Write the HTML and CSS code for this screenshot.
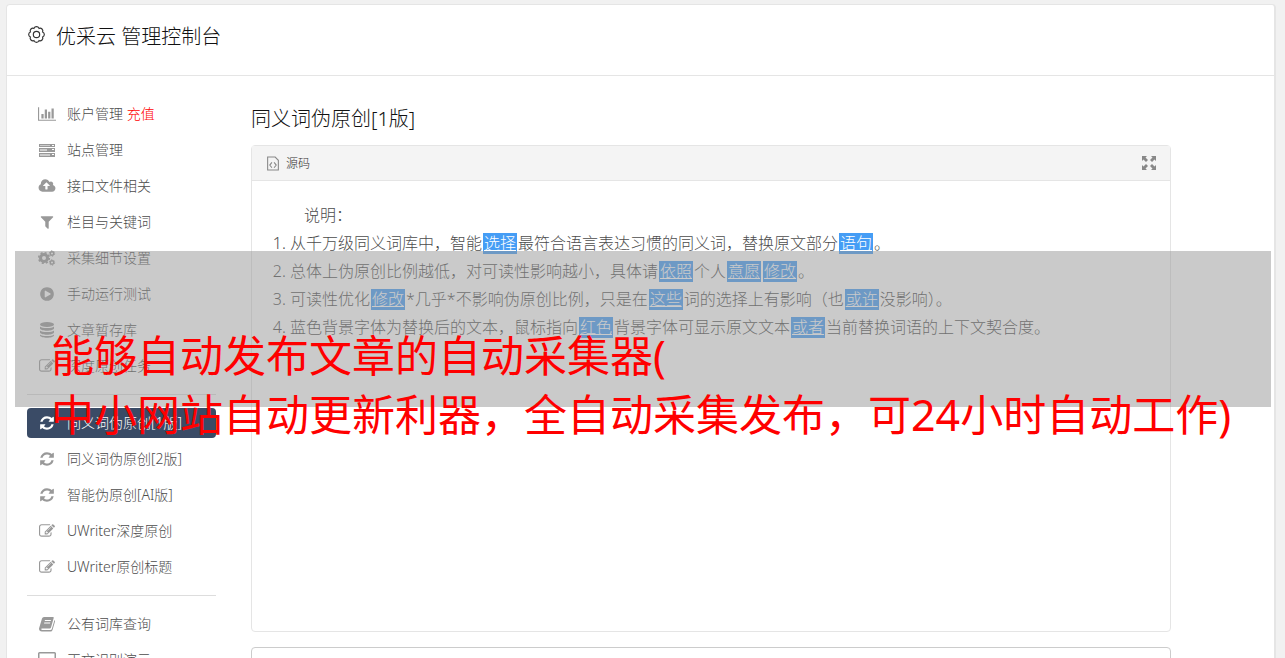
FILE: index.html
```html
<!DOCTYPE html>
<html lang="zh-Hans">
<head>
<meta charset="UTF-8">
<meta name="viewport" content="width=device-width, initial-scale=1.0">
<title>优采云 管理控制台</title>
<link rel="stylesheet" href="styles.css">
</head>
<body>
<svg class="sprite" aria-hidden="true">
    <symbol id="i-edit" viewBox="0 0 1792 1792"><path d="M888 1184l116-116-152-152-116 116v56h96v96h56zm440-720q-16-16-33 1l-350 350q-17 17-1 33t33-1l350-350q17-17 1-33zm80 594v190q0 119-84.500 203.500t-203.500 84.500h-832q-119 0-203.500-84.500t-84.500-203.500v-832q0-119 84.500-203.500t203.500-84.500h832q63 0 117 25 15 7 18 23 3 17-9 29l-49 49q-14 14-32 8-23-6-45-6h-832q-66 0-113 47t-47 113v832q0 66 47 113t113 47h832q66 0 113-47t47-113v-126q0-13 9-22l64-64q15-15 35-7t20 29zm-96-738l288 288-672 672h-288v-288zm444 132l-92 92-288-288 92-92q28-28 68-28t68 28l152 152q28 28 28 68t-28 68z"/></symbol>
    <symbol id="i-refresh" viewBox="0 0 1792 1792"><path d="M1639 1056q0 5-1 7-64 268-268 434.500t-478 166.500q-146 0-282.500-55t-243.500-157l-129 129q-19 19-45 19t-45-19-19-45v-448q0-26 19-45t45-19h448q26 0 45 19t19 45-19 45l-137 137q71 66 161 102t187 36q134 0 250-65t186-179q11-17 53-117 8-23 30-23h192q13 0 22.500 9.500t9.500 22.500zm25-800v448q0 26-19 45t-45 19h-448q-26 0-45-19t-19-45 19-45l138-138q-148-137-349-137-134 0-250 65t-186 179q-11 17-53 117-8 23-30 23h-199q-13 0-22.500-9.500t-9.500-22.500v-7q65-268 270-434.500t480-166.500q146 0 284 55.500t245 156.500l130-129q19-19 45-19t45 19 19 45z"/></symbol>
</svg>

<div class="panel">
    <header class="panel-head">
        <svg class="gear" viewBox="0 0 18 18"><path d="M14.800 6.600A2.600 2.600 0 0 1 14.800 11.400A2.600 2.600 0 0 1 11.400 14.800A2.600 2.600 0 0 1 6.600 14.800A2.600 2.600 0 0 1 3.200 11.400A2.600 2.600 0 0 1 3.200 6.600A2.600 2.600 0 0 1 6.600 3.200A2.600 2.600 0 0 1 11.400 3.200A2.600 2.600 0 0 1 14.800 6.600z"/><circle cx="9" cy="9" r="3"/></svg>
        <h1>优采云 管理控制台</h1>
    </header>

    <div class="panel-body">
        <nav class="sidebar">
            <ul>
                <li><a href="#"><svg class="icon" viewBox="0 0 2048 1792"><path d="M640 896v512h-256v-512h256zm384-512v1024h-256v-1024h256zm1024 1152v128h-2048v-1536h128v1408h1920zm-640-896v768h-256v-768h256zm384-384v1152h-256v-1152h256z"/></svg><span>账户管理 <em>充值</em></span></a></li>
                <li><a href="#"><svg class="icon" viewBox="0 0 18 16"><path fill-rule="evenodd" d="M1 2h16v3H1zM1 6h16v4H1zM1 11h16v4H1zM14 3v1h2V3zM14 7v1h2V7zM14 12v1h2v-1z"/><path class="slot" d="M2 3h10v1H2zM2 7h7v2H2zM2 12h10v2H2z"/></svg><span>站点管理</span></a></li>
                <li><a href="#"><svg class="icon" viewBox="0 0 2048 1792"><path d="M1344 864q0-14-9-23l-352-352q-9-9-23-9t-23 9l-351 351q-10 12-10 24 0 14 9 23t23 9h224v352q0 13 9.500 22.500t22.500 9.500h192q13 0 22.500-9.500t9.500-22.500v-352h224q13 0 22.500-9.500t9.500-22.500zm640 288q0 159-112.500 271.500t-271.500 112.500h-1088q-185 0-316.500-131.500t-131.500-316.500q0-130 70-240t188-165q-2-30-2-43 0-212 150-362t362-150q156 0 285.500 87t188.500 231q71-62 166-62 106 0 181 75t75 181q0 76-41 138 130 31 213.500 135.500t83.500 238.500z"/></svg><span>接口文件相关</span></a></li>
                <li><a href="#"><svg class="icon" viewBox="0 0 1792 1792"><path d="M1595 295q17 41-14 70l-493 493v742q0 42-39 59-13 5-25 5-27 0-45-19l-256-256q-19-19-19-45v-486l-493-493q-31-29-14-70 17-39 59-39h1280q42 0 59 39z"/></svg><span>栏目与关键词</span></a></li>
                <li><a href="#"><svg class="icon cogs" viewBox="0 0 18 16"><circle cx="6" cy="8" r="3.500" stroke-width="3"/><circle cx="6" cy="8" r="5.300" stroke-width="1.600" stroke-dasharray="2.080"/><circle cx="14" cy="3.500" r="1.700" stroke-width="1.400"/><circle cx="14" cy="3.500" r="2.700" stroke-width="1" stroke-dasharray="1.410"/><circle cx="14" cy="12.500" r="1.700" stroke-width="1.400"/><circle cx="14" cy="12.500" r="2.700" stroke-width="1" stroke-dasharray="1.410"/></svg><span>采集细节设置</span></a></li>
                <li><a href="#"><svg class="icon" viewBox="0 0 1792 1792"><path d="M896 128q209 0 385.500 103t279.500 279.500 103 385.500-103 385.500-279.500 279.500-385.500 103-385.500-103-279.500-279.500-103-385.500 103-385.500 279.500-279.500 385.500-103zm384 823q32-18 32-55t-32-55l-544-320q-31-19-64-1-32 19-32 56v640q0 37 32 56 16 8 32 8 17 0 32-9z"/></svg><span>手动运行测试</span></a></li>
                <li><a href="#"><svg class="icon" viewBox="0 0 18 16"><ellipse cx="9" cy="2.500" rx="7" ry="2.500"/><path d="M2 4.500c2 2 12 2 14 0v2c-1 3-13 3-14 0zM2 8.500c2 2 12 2 14 0v2c-1 3-13 3-14 0zM2 12.500c2 2 12 2 14 0v1c-1 3-13 3-14 0z"/></svg><span>文章暂存库</span></a></li>
                <li><a href="#"><svg class="icon"><use href="#i-edit"/></svg><span>深度原创任务</span></a></li>
            </ul>
            <hr>
            <ul>
                <li><a href="#" class="active"><svg class="icon"><use href="#i-refresh"/></svg><span>同义词伪原创[1版]</span></a></li>
                <li><a href="#"><svg class="icon"><use href="#i-refresh"/></svg><span>同义词伪原创[2版]</span></a></li>
                <li><a href="#"><svg class="icon"><use href="#i-refresh"/></svg><span>智能伪原创[AI版]</span></a></li>
                <li><a href="#"><svg class="icon"><use href="#i-edit"/></svg><span>UWriter深度原创</span></a></li>
                <li><a href="#"><svg class="icon"><use href="#i-edit"/></svg><span>UWriter原创标题</span></a></li>
            </ul>
            <hr>
            <ul>
                <li><a href="#"><svg class="icon" viewBox="0 0 18 16"><path fill-rule="evenodd" d="M6 1h9q1 0 .7 1L13 11.500q-.3 1-1.300 1H4q-1 0-.8.8.2.7 1.300.7h8q1 0 1.300-1L16.500 4q.8.500.5 1.500L14.500 14q-.4 1.500-2 1.500H4Q1 15.500 1 12.500L4 2.500Q4.500 1 6 1zM7 4l-.3 1h6l.3-1zM6.300 6.500l-.3 1h6l.3-1z"/></svg><span>公有词库查询</span></a></li>
                <li><a href="#"><svg class="icon" viewBox="0 0 18 16"><path fill-rule="evenodd" d="M1.500 0h15Q18 0 18 1.500v10q0 1.500-1.500 1.500H11v2h2v1H5v-1h2v-2H1.500Q0 13 0 11.500v-10Q0 0 1.500 0zM1.500 1.500v9h15v-9z"/></svg><span>正文识别演示</span></a></li>
            </ul>
        </nav>

        <main class="content">
            <h2>同义词伪原创[1版]</h2>
            <section class="editor">
                <div class="toolbar">
                    <button type="button"><svg class="code" viewBox="0 0 12 14"><path d="M1 1h7l3 3v9H1zM5 6L3 8.500 5 11M7 6l2 2.500L7 11"/></svg>源码</button>
                    <button type="button" aria-label="全屏"><svg class="expand" viewBox="0 0 14 14"><path d="M0 0h5L3.500 1.500 6 4 4 6 1.500 3.500 0 5zM14 0v5l-1.500-1.500L10 6 8 4l2.500-2.500L9 0zM0 14V9l1.500 1.500L4 8l2 2-2.500 2.500L5 14zM14 14H9l1.500-1.500L8 10l2-2 2.500 2.500L14 9z"/></svg></button>
                </div>
                <div class="article">
                    <p>说明：</p>
                    <ol>
                        <li>从千万级同义词库中，智能<a href="#">选择</a>最符合语言表达习惯的同义词，替换原文部分<a href="#">语句</a>。</li>
                        <li>总体上伪原创比例越低，对可读性影响越小，具体请<a href="#">依照</a>个人<a href="#">意愿</a><a href="#">修改</a>。</li>
                        <li>可读性优化<a href="#">修改</a>*几乎*不影响伪原创比例，只是在<a href="#">这些</a>词的选择上有影响（也<a href="#">或许</a>没影响）。</li>
                        <li>蓝色背景字体为替换后的文本，鼠标指向<a href="#">红色</a>背景字体可显示原文文本<a href="#">或者</a>当前替换词语的上下文契合度。</li>
                    </ol>
                </div>
            </section>
            <section class="result"></section>
        </main>
    </div>
</div>

<!-- 标题浮层 -->
<div class="caption">能够自动发布文章的自动采集器(<br>中小网站自动更新利器，全自动采集发布，可24小时自动工作)</div>
</body>
</html>
```
FILE: styles.css
```css
* {
    box-sizing: border-box;
}
body {
    margin: 0;
    height: 100vh;
    overflow: hidden;
    position: relative;
    background: #f1f1f1;
    color: #4c4c4c;
    font-family: "Noto Sans", "Noto Sans CJK SC", sans-serif;
    font-weight: 300;
    font-size: 14px;
}
h1, h2, p, ol, ul {
    margin: 0;
    padding: 0;
}
.sprite {
    display: none;
}
.panel {
    margin: 4px 9px 0 6px;
    background: #fff;
    border: 1px solid #e5e5e5;
    border-right-width: 2px;
    border-radius: 4px;
}
.panel-head {
    display: flex;
    gap: 10px;
    height: 71px;
    padding: 17px 20px;
    border-bottom: 1px solid #e5e5e5;
}
.panel-head h1,
.content h2 {
    color: #111;
    font-size: 20px;
    font-weight: 300;
    line-height: 30px;
}
.gear {
    width: 19px;
    height: 19px;
    margin-top: 3px;
    fill: none;
    stroke: #333;
    stroke-width: 1.1;
}
.panel-body {
    display: flex;
    gap: 35px;
    padding: 23px 103px 0 20px;
}

/* 左侧菜单 */
.sidebar {
    flex: 0 0 189px;
}
.sidebar ul {
    display: grid;
    gap: 6px;
    list-style: none;
}
.sidebar a {
    display: flex;
    align-items: center;
    gap: 11px;
    height: 30px;
    padding-left: 11px;
    border-radius: 4px;
    color: #4c4c4c;
    line-height: 30px;
    text-decoration: none;
    white-space: nowrap;
}
.sidebar a.active {
    background: #3a4b66;
    color: #fff;
}
.sidebar em {
    color: #f00;
    font-style: normal;
}
.sidebar hr {
    height: 1px;
    margin: 13px 0;
    border: 0;
    background: #ddd;
}
.icon {
    width: 18px;
    height: 16px;
    fill: #999;
}
.icon .slot {
    fill: #ccc;
}
.active .icon {
    fill: #fff;
}
.cogs {
    fill: none;
    stroke: #999;
}

/* 右侧内容 */
.content {
    flex: 1;
    min-width: 0;
    padding-top: 5px;
}
.content h2 {
    margin-bottom: 11px;
}
.editor {
    min-height: 487px;
    border: 1px solid #e5e5e5;
    border-radius: 4px;
}
.toolbar {
    display: flex;
    justify-content: space-between;
    height: 35px;
    padding: 0 14px;
    background: #f4f4f4;
    border-bottom: 1px solid #e5e5e5;
}
.toolbar button {
    display: flex;
    align-items: center;
    gap: 6px;
    padding: 0;
    border: 0;
    background: none;
    color: #333;
    font: inherit;
    font-size: 12px;
    cursor: pointer;
}
.code {
    width: 14px;
    height: 15px;
    fill: none;
    stroke: #888;
}
.expand {
    width: 14px;
    height: 14px;
    fill: #888;
}
.article {
    padding: 20px;
    font-size: 16px;
    line-height: 28px;
}
.article p {
    text-indent: 2em;
}
.article ol {
    padding-left: 18px;
}
.article a {
    display: inline-block;
    margin: 0 1px;
    padding: 0 1px;
    background: #459df5;
    color: #fff;
    line-height: 21px;
}
.result {
    height: 200px;
    margin-top: 15px;
    border: 1px solid #ccc;
    border-radius: 4px;
}

.caption {
    position: absolute;
    top: 251px;
    left: 15px;
    right: 14px;
    height: 156px;
    padding: 75px 0 0 36px;
    background: rgba(150, 150, 150, 0.5);
    color: #f00;
    font-size: 43px;
    font-weight: 400;
    line-height: 59px;
    white-space: nowrap;
}
```
